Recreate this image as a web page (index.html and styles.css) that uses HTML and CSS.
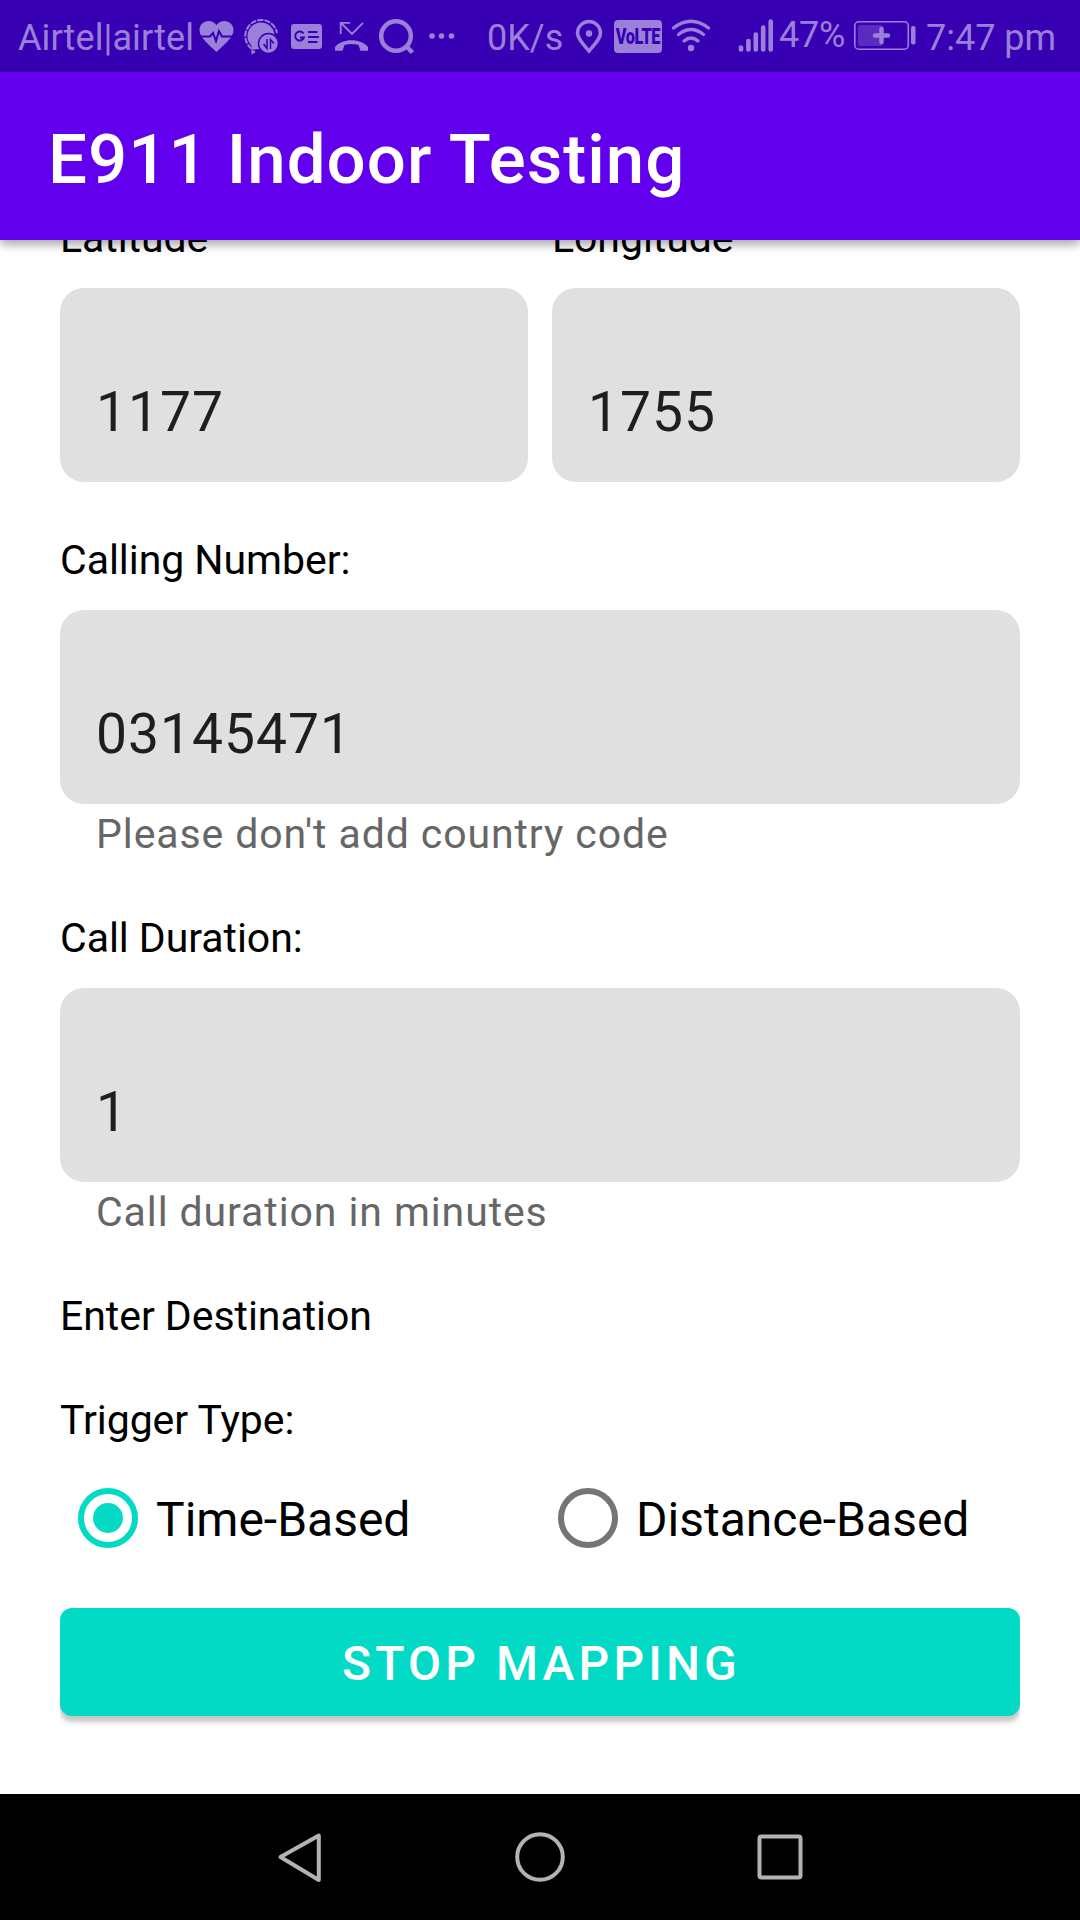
FILE: index.html
```
<!DOCTYPE html>
<html lang="en">
<head>
<meta charset="utf-8">
<title>E911 Indoor Testing</title>
<link rel="stylesheet" href="styles.css">
</head>
<body>
<div class="screen">
  <header class="status">
    <span class="carrier">Airtel|airtel</span>
    <svg class="ic heart" width="36" height="72" viewBox="198 0 36 72">
      <path class="f" d="M216.500 52C210 45.500 199.500 38 199.500 30C199.500 21 211 17.500 216.500 25C222 17.500 233.500 21 233.500 30C233.500 38 223 45.500 216.500 52Z"/>
      <path class="cut" d="M200 36.500H210L213 33L216 41L219 31L222 36.500H233"/>
    </svg>
    <svg class="ic chat" width="38" height="72" viewBox="242 0 38 72">
      <path class="dash" d="M255 51.200L252.500 53L252 49A16 16 0 1 1 277 33"/>
      <circle class="f" cx="261" cy="36" r="13.500"/>
      <path class="f" d="M251 43L252.500 50L262 48Z"/>
      <circle class="f ring" cx="268.500" cy="43.500" r="10"/>
      <path class="cut thin" d="M263.500 44L267 48.500V39M270.500 49V39.500L274 43.500"/>
    </svg>
    <svg class="ic news" width="32" height="72" viewBox="291 0 32 72">
      <rect class="f" x="291" y="24" width="31" height="25" rx="3"/>
      <path class="cut" d="M303.500 33.500A4.500 4.500 0 1 0 304 37.500H300M308 32H317.500M308 37H319M308 42H317.500"/>
    </svg>
    <svg class="ic missed" width="34" height="72" viewBox="335 0 34 72">
      <path class="s" d="M340.700 34V22.800H350M341.500 23.500L352 34L363 22.800"/>
      <path class="f" d="M335 47C342 38 361 38 368 47V50.800H360.500L358.500 45C354 43.500 349 43.500 344.500 45L342.500 50.800H335Z"/>
    </svg>
    <svg class="ic find" width="36" height="72" viewBox="379 0 36 72">
      <circle class="s bold" cx="396" cy="36" r="14.800"/>
      <path class="s bold" d="M406 46L412.500 52.500"/>
    </svg>
    <svg class="ic more" width="26" height="72" viewBox="429 0 26 72">
      <circle class="f" cx="432" cy="36" r="2.800"/><circle class="f" cx="441.500" cy="36" r="2.800"/><circle class="f" cx="451.500" cy="36" r="2.800"/>
    </svg>
    <span class="speed">0K/s</span>
    <svg class="ic pin" width="28" height="72" viewBox="575 0 28 72">
      <path class="s loc" d="M589 51C583 44 577.500 38.500 577.500 33A11.500 11.500 0 0 1 600.500 33C600.500 38.500 595 44 589 51Z"/>
      <circle class="f" cx="589" cy="33.500" r="3.200"/>
    </svg>
    <span class="volte"><span>VoLTE</span></span>
    <svg class="ic wifi" width="40" height="72" viewBox="671 0 40 72">
      <path class="s wave" d="M673.500 28Q691 14.500 708.500 28M678.500 34.500Q691 24.500 703.500 34.500M684 41Q691 35 698 41"/>
      <circle class="f" cx="691" cy="48" r="3.200"/>
    </svg>
    <svg class="ic signal" width="36" height="72" viewBox="738 0 36 72">
      <path class="s bar" d="M741 47.500V49.500M748.400 41V49.500M755.800 34.500V49.500M763.200 27.500V49.500M770.700 21.500V49.500"/>
    </svg>
    <span class="percent">47%</span>
    <svg class="ic battery" width="64" height="72" viewBox="854 0 64 72">
      <rect class="s shell" x="854.800" y="21.800" width="53.500" height="27.400" rx="4"/>
      <rect class="charge" x="858" y="25" width="25" height="21" rx="2"/>
      <path class="s plus" d="M881.500 29V42M875 35.500H888"/>
      <rect class="f" x="911" y="26" width="4.500" height="18.500" rx="2"/>
    </svg>
    <span class="clock">7:47 pm</span>
  </header>

  <div class="appbar"><h1>E911 Indoor Testing</h1></div>

  <main class="content">
    <div class="pair">
      <label class="group"><span class="label">Latitude</span><span class="field">1177</span></label>
      <label class="group"><span class="label">Longitude</span><span class="field">1755</span></label>
    </div>
    <label class="group"><span class="label">Calling Number:</span><span class="field">03145471</span><span class="hint">Please don't add country code</span></label>
    <label class="group"><span class="label">Call Duration:</span><span class="field">1</span><span class="hint">Call duration in minutes</span></label>
    <div class="label destination">Enter Destination</div>
    <div class="label">Trigger Type:</div>
    <div class="radios">
      <div class="radio"><span class="dot on"></span><span class="option">Time-Based</span></div>
      <div class="radio"><span class="dot"></span><span class="option">Distance-Based</span></div>
    </div>
    <div class="clip"><button class="stop">STOP MAPPING</button></div>
  </main>

  <nav class="nav">
    <svg width="240" height="126" viewBox="180 0 240 126"><path d="M318.800 41.500V86L280.500 63Z"/></svg>
    <svg width="240" height="126" viewBox="420 0 240 126"><circle cx="540" cy="63" r="22.800"/></svg>
    <svg width="240" height="126" viewBox="660 0 240 126"><rect x="759.500" y="42.500" width="41" height="41" rx="2"/></svg>
  </nav>
</div>
</body>
</html>
```
FILE: styles.css
```
* { box-sizing: border-box; }
body { margin: 0; font-family: Roboto, sans-serif; background: #fff; }
.screen { width: 1080px; height: 1920px; display: flex; flex-direction: column; overflow: hidden; }

.status { height: 72px; flex: none; display: flex; background: #3700b3; color: #9b80d9; font-size: 36px; line-height: 76px; white-space: nowrap; padding-left: 18px; }
.carrier { width: 180px; letter-spacing: 0.1px; }
.ic { flex: none; display: block; }
.f { fill: #9b80d9; }
.s { fill: none; stroke: #9b80d9; stroke-width: 1.800; }
.bold { stroke-width: 4.500; }
.loc { stroke-width: 3.500; }
.wave { stroke-width: 3.300; stroke-linecap: round; }
.bar { stroke-width: 4.600; stroke-linecap: round; }
.shell { stroke-width: 1.600; }
.plus { stroke-width: 4.500; stroke-linecap: round; }
.charge { fill: #5a2bc0; }
.cut { fill: none; stroke: #3700b3; stroke-width: 2; }
.thin { stroke-width: 1.500; }
.ring { stroke: #3700b3; stroke-width: 1.500; }
.dash { fill: none; stroke: #9b80d9; stroke-width: 2; stroke-dasharray: 6 1.200; }
.chat { margin-left: 8px; }
.news { margin-left: 11px; }
.missed { margin-left: 12px; }
.find { margin-left: 10px; }
.more { margin-left: 14px; }
.speed { width: 88px; margin-left: 32px; }
.volte { width: 48px; height: 33px; margin: 20px 9px 0 11px; flex: none; border-radius: 4px; background: #9b80d9; color: #3700b3; display: flex; justify-content: center; align-items: center; font-size: 22px; line-height: 33px; font-weight: 900; letter-spacing: -0.5px; }
.volte span { transform: scaleX(0.74); }
.signal { margin-left: 27px; }
.percent { width: 75px; margin-left: 5px; line-height: 70px; letter-spacing: -0.2px; }
.clock { margin-left: 8px; }

.appbar { height: 168px; flex: none; background: #6200ee; position: relative; z-index: 1; padding: 0 48px; display: flex; align-items: center; box-shadow: 0 4px 10px rgba(0,0,0,.38); }
.appbar h1 { margin: 0; color: #fff; font-size: 69px; line-height: 81px; font-weight: 500; letter-spacing: 1px; padding-top: 7px; white-space: nowrap; }

.content { flex: 1; min-height: 0; overflow: hidden; padding: 0 60px; }
.pair { display: flex; gap: 24px; margin: -26px 0 54px; }
.group { display: flex; flex-direction: column; flex: 1; }
.label { display: block; font-size: 41px; line-height: 49px; letter-spacing: -0.05px; color: #000; white-space: nowrap; }
.field { height: 194px; margin-top: 25px; border-radius: 24px; background: #e0e0e0; color: #1e1e1e; font-size: 55.2px; line-height: 65px; padding: 92px 36px 0; letter-spacing: 1px; }
.hint { height: 110px; padding: 6px 36px 0; font-size: 41px; line-height: 49px; letter-spacing: 0.9px; color: #666; white-space: nowrap; }
.destination { margin-bottom: 55px; }
.radios { display: flex; height: 96px; margin: 25px 0 42px; }
.radio { width: 480px; display: flex; align-items: center; font-size: 48px; line-height: 57px; padding-left: 18px; white-space: nowrap; }
.option { padding-top: 2px; }
.dot { width: 60px; height: 60px; margin-right: 18px; flex: none; border: 6px solid #757575; border-radius: 50%; display: grid; place-items: center; }
.dot.on { border-color: #03dac5; }
.dot.on::after { content: ""; width: 30px; height: 30px; border-radius: 50%; background: #03dac5; }
.clip { overflow: hidden; height: 130px; }
.stop { display: block; width: 100%; height: 108px; padding: 3px 0 0 3px; border: 0; border-radius: 12px; background: #03dac5; color: #fff; font: 500 48px/57px Roboto, sans-serif; letter-spacing: 4.15px; box-shadow: 0 6px 5px rgba(0,0,0,.22); }

.nav { height: 126px; flex: none; background: #000; display: flex; justify-content: center; }
.nav svg { fill: none; stroke: #b3b3b3; stroke-width: 4; stroke-linejoin: round; }
```
